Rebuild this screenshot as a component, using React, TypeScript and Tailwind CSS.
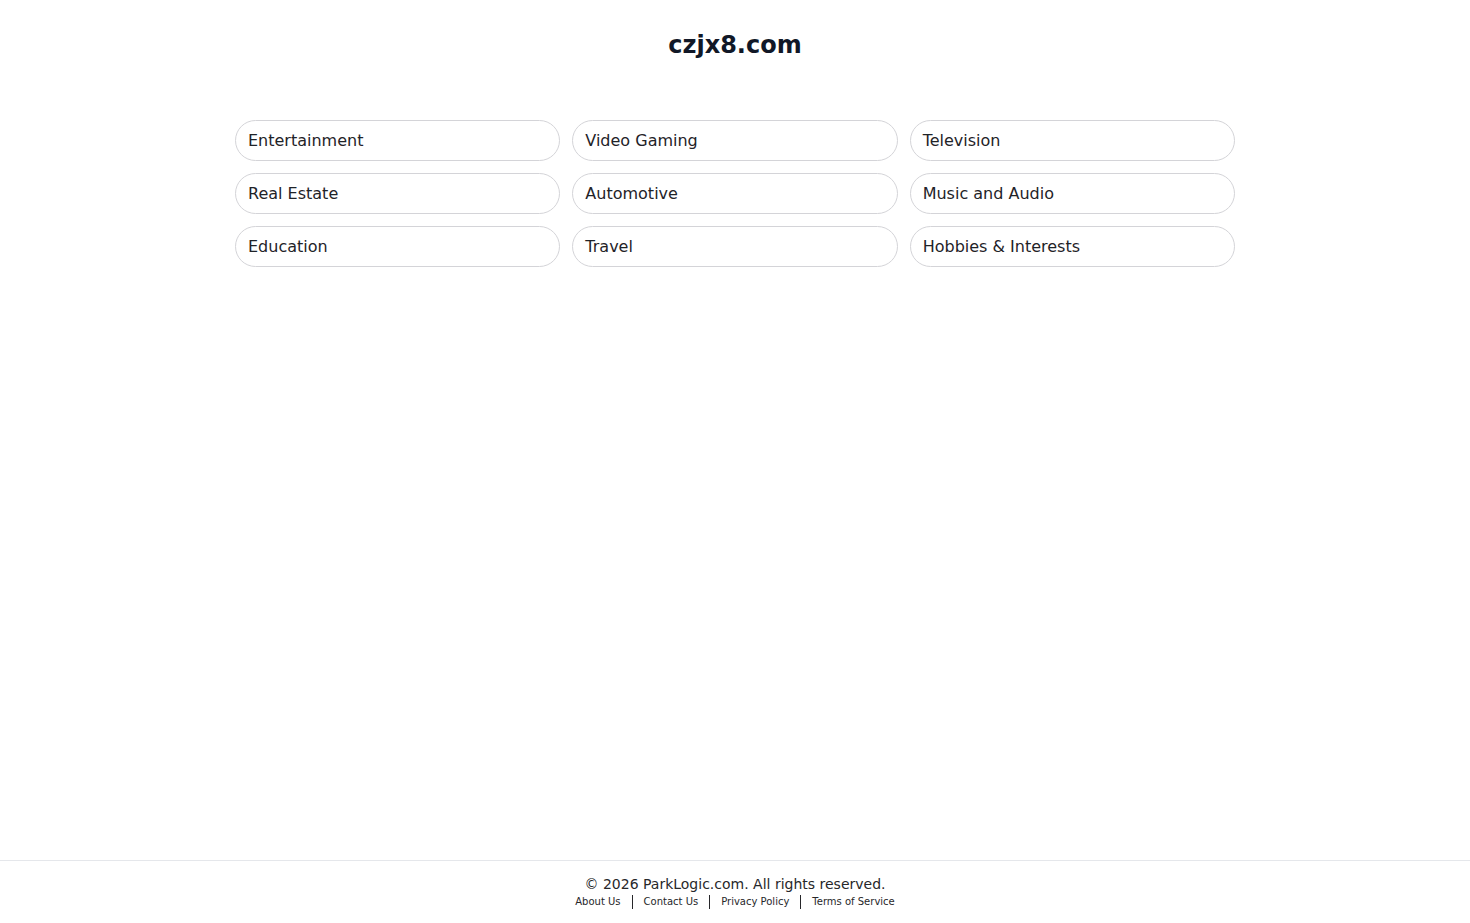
const CATEGORIES = [
  "Entertainment",
  "Video Gaming",
  "Television",
  "Real Estate",
  "Automotive",
  "Music and Audio",
  "Education",
  "Travel",
  "Hobbies & Interests",
];

const LINKS = ["About Us", "Contact Us", "Privacy Policy", "Terms of Service"];

export default function App() {
  return (
    <div className="min-h-screen flex flex-col bg-white text-[#1f2328] font-['DejaVu_Sans',sans-serif]">
      <main className="flex-1 flex flex-col items-center">
        <h1 className="pt-[29px] h-[60px] leading-8 text-2xl font-bold text-[#111827]">czjx8.com</h1>
        <div className="mt-[60px] w-[1000px] grid grid-cols-3 gap-x-[12px] gap-y-[12px]">
          {CATEGORIES.map((c) => (
            <a
              key={c}
              href="#"
              className="h-[41px] flex items-center px-[12px] rounded-full border border-[#d4d4d8] text-base text-[#1f2328]"
            >
              {c}
            </a>
          ))}
        </div>
      </main>
      <footer className="h-[63px] border-t border-[#e5e7eb] flex flex-col items-center pt-[13px]">
        <p className="text-sm leading-5 text-[#27272a]">© 2026 ParkLogic.com. All rights reserved.</p>
        <div className="flex items-center text-[10px] leading-4 text-[#27272a]">
          {LINKS.map((l, i) => (
            <div key={l} className="flex items-center">
              {i > 0 && <span className="mx-[11px] h-[14px] border-l border-[#27272a]" />}
              <a href="#">{l}</a>
            </div>
          ))}
        </div>
      </footer>
    </div>
  );
}
